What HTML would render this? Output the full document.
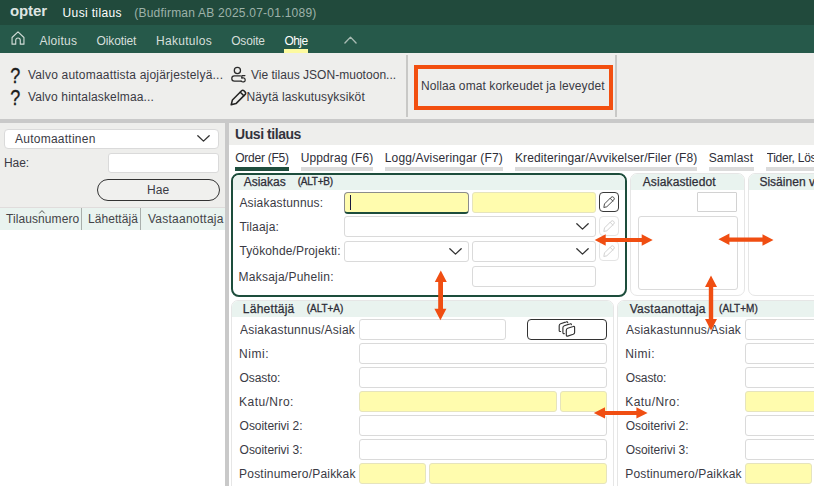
<!DOCTYPE html>
<html lang="fi">
<head>
<meta charset="utf-8">
<title>Uusi tilaus</title>
<style>
*{box-sizing:border-box;margin:0;padding:0}
html,body{width:814px;height:486px;overflow:hidden;background:#fff}
body{position:relative;font-family:"Liberation Sans",sans-serif;font-size:12px;color:#3a3a44}
.a{position:absolute}
.t{position:absolute;white-space:pre;line-height:1}
.m{-webkit-text-stroke:.25px currentColor}
.k{transform:scaleY(1.02);transform-origin:0 8px;-webkit-text-stroke:.3px currentColor}
.in{position:absolute;height:21px;background:#fff;border:1px solid #dadada;border-radius:3px}
.y{background:#fffcae;border-color:#e6e4bd}
.box{position:absolute;background:#fff;border:1px solid #e6e6e6;border-radius:7px;overflow:hidden}
.box .hd{position:absolute;left:0;right:0;top:0;height:16px;background:#e9f3ef}
.ul{position:absolute;top:167px;height:4px;background:#dbdbdb}
.q{font-size:22.5px;color:#1c1c1c;transform:scaleX(.8);transform-origin:50% 50%;-webkit-text-stroke:.35px #1c1c1c}
svg{position:absolute;overflow:visible}
</style>
</head>
<body>
<!-- title + menu bars -->
<div class="a" style="left:0;top:0;width:814px;height:25px;background:#214a3c"></div>
<div class="a" style="left:0;top:25px;width:814px;height:28px;background:#26594a"></div>
<div class="a" style="left:284px;top:49px;width:24px;height:4px;background:#fdfaa0"></div>
<!-- home icon -->
<svg style="left:10.6px;top:31.3px" width="14" height="14" viewBox="0 0 16 16" fill="none" stroke="#d0dbd6" stroke-width="1.3" stroke-linejoin="round" stroke-linecap="round"><path d="M1.2 7.4 L8 1 L14.8 7.4 V15 H10.6 V10.6 a2.6 2.6 0 0 0 -5.2 0 V15 H1.2 Z"/></svg>
<!-- collapse chevron -->
<svg style="left:343.5px;top:36.3px" width="13" height="8.4" viewBox="0 0 14 9" fill="none" stroke="#a9bbb3" stroke-width="1.5" stroke-linecap="round" stroke-linejoin="round"><path d="M1 7.5 L7 1.2 L13 7.5"/></svg>

<!-- ribbon -->
<div class="a" style="left:0;top:53px;width:814px;height:66px;background:#eeeeec"></div>
<div class="a" style="left:0;top:119px;width:814px;height:4px;background:#c9c9c9"></div>
<div class="a" style="left:406px;top:55px;width:2px;height:62px;background:#c8c8c6"></div>
<div class="a" style="left:615px;top:55px;width:2px;height:62px;background:#c8c8c6"></div>
<div class="a" style="left:414px;top:65px;width:199px;height:45px;border:4px solid #f24f10"></div>
<!-- question marks -->
<div class="t q" style="left:9px;top:65px">?</div>
<div class="t q" style="left:9px;top:87px">?</div>
<!-- user icon -->
<svg style="left:231px;top:67px" width="15" height="16" viewBox="0 0 15 16" fill="none" stroke="#2a2a2a" stroke-width="1.25" stroke-linecap="round" stroke-linejoin="round"><circle cx="6.4" cy="3.5" r="3.1"/><path d="M9.4 8.9 H3.4 a2.6 2.6 0 0 0 0 5.2 H10.2"/><path d="M13.9 8.6 H10.9 L10.7 11.1 c1.5 -0.8 3.5 -0.1 3.5 1.8 c0 2.1 -2.5 2.7 -4.1 1.2"/></svg>
<!-- pencil icon -->
<svg style="left:230px;top:88.5px" width="17" height="17" viewBox="0 0 17 17" fill="none" stroke="#222" stroke-width="1.5" stroke-linejoin="round" stroke-linecap="round"><path d="M1.2 15.8 L2.4 11 L11.6 1.8 a1.6 1.6 0 0 1 2.3 0 L15.2 3.1 a1.6 1.6 0 0 1 0 2.3 L6 14.6 Z"/><path d="M10.3 3.2 L13.8 6.7"/></svg>

<!-- left panel -->
<div class="a" style="left:0;top:123px;width:225px;height:363px;background:#fff"></div>
<div class="a" style="left:0;top:123px;width:225px;height:85px;background:#eeeeec"></div>
<div class="a" style="left:225px;top:123px;width:4px;height:363px;background:#c9c9c9"></div>
<div class="in" style="left:4px;top:129px;width:215px;height:20px;border-radius:4px"></div>
<svg style="left:197px;top:135px" width="13" height="7" viewBox="0 0 13 7" fill="none" stroke="#333" stroke-width="1.3" stroke-linecap="round" stroke-linejoin="round"><path d="M0.8 0.7 L6.5 6.1 L12.2 0.7"/></svg>
<div class="in" style="left:108px;top:153px;width:111px;height:20px"></div>
<div class="a" style="left:97px;top:179px;width:122.5px;height:22px;border:1px solid #333;border-radius:11px;background:#f0f0ee"></div>
<div class="a" style="left:0;top:207px;width:225px;height:1px;background:#e0dcdc"></div>
<div class="a" style="left:0;top:208px;width:225px;height:22px;background:#e9f3ef"></div>
<div class="a" style="left:81px;top:208px;width:1px;height:22px;background:#a9afac"></div>
<div class="a" style="left:140px;top:208px;width:1px;height:22px;background:#a9afac"></div>
<svg style="left:39px;top:210px" width="6" height="4" viewBox="0 0 6 4" fill="none" stroke="#444" stroke-width="0.9"><path d="M0.3 3.4 L3 0.6 L5.7 3.4"/></svg>

<!-- right panel -->
<div class="a" style="left:229px;top:123px;width:585px;height:22px;background:#eeeeec"></div>
<!-- tab underlines -->
<div class="ul" style="left:235px;width:54px;background:#1f4d3d"></div>
<div class="ul" style="left:301px;width:72px"></div>
<div class="ul" style="left:385px;width:118px"></div>
<div class="ul" style="left:515px;width:182px"></div>
<div class="ul" style="left:709px;width:45px"></div>
<div class="ul" style="left:766px;width:48px"></div>

<!-- Asiakas box -->
<div class="box" style="left:231px;top:173px;width:396px;height:124px;border:2px solid #1d4d3c;border-radius:8px"><div class="hd" style="height:15px"></div></div>
<div class="in y" style="left:344px;top:192px;width:125px;height:22px;border-color:#8c8c8c;border-bottom:2px solid #1d4d3c;border-radius:4px"></div>
<div class="a" style="left:350px;top:195px;width:1px;height:15px;background:#1a1a40"></div>
<div class="in y" style="left:472px;top:192px;width:124px"></div>
<div class="in" style="left:344px;top:216px;width:252px"></div>
<div class="in" style="left:344px;top:241px;width:125px"></div>
<div class="in" style="left:472px;top:241px;width:124px"></div>
<div class="in" style="left:472px;top:266px;width:124px"></div>
<svg style="left:576px;top:223px" width="13" height="7" viewBox="0 0 13 7" fill="none" stroke="#333" stroke-width="1.3" stroke-linecap="round" stroke-linejoin="round"><path d="M0.8 0.7 L6.5 6.1 L12.2 0.7"/></svg>
<svg style="left:449px;top:248px" width="13" height="7" viewBox="0 0 13 7" fill="none" stroke="#333" stroke-width="1.3" stroke-linecap="round" stroke-linejoin="round"><path d="M0.8 0.7 L6.5 6.1 L12.2 0.7"/></svg>
<svg style="left:576px;top:248px" width="13" height="7" viewBox="0 0 13 7" fill="none" stroke="#333" stroke-width="1.3" stroke-linecap="round" stroke-linejoin="round"><path d="M0.8 0.7 L6.5 6.1 L12.2 0.7"/></svg>
<!-- edit buttons -->
<div class="a" style="left:599px;top:192px;width:20px;height:20px;border:1px solid #3a3a3a;border-radius:4px;background:#fff"></div>
<div class="a" style="left:599px;top:216px;width:20px;height:20px;border:1px solid #e4e4e4;border-radius:4px;background:#fff"></div>
<div class="a" style="left:599px;top:241px;width:20px;height:20px;border:1px solid #e4e4e4;border-radius:4px;background:#fff"></div>
<svg style="left:603px;top:196px" width="12" height="12" viewBox="0 0 12 12" fill="none" stroke="#444" stroke-width="0.95" stroke-linejoin="round" stroke-linecap="round"><path d="M0.9 11.1 L1.5 7.9 L8 1.4 a1.9 1.9 0 0 1 2.7 2.7 L4.1 10.5 Z"/><path d="M7.1 2.3 L9.8 5"/></svg>
<svg style="left:603px;top:220px" width="12" height="12" viewBox="0 0 12 12" fill="none" stroke="#cfcfcf" stroke-width="0.95" stroke-linejoin="round" stroke-linecap="round"><path d="M0.9 11.1 L1.5 7.9 L8 1.4 a1.9 1.9 0 0 1 2.7 2.7 L4.1 10.5 Z"/><path d="M7.1 2.3 L9.8 5"/></svg>
<svg style="left:603px;top:245px" width="12" height="12" viewBox="0 0 12 12" fill="none" stroke="#cfcfcf" stroke-width="0.95" stroke-linejoin="round" stroke-linecap="round"><path d="M0.9 11.1 L1.5 7.9 L8 1.4 a1.9 1.9 0 0 1 2.7 2.7 L4.1 10.5 Z"/><path d="M7.1 2.3 L9.8 5"/></svg>

<!-- Asiakastiedot -->
<div class="box" style="left:630px;top:173px;width:115px;height:123px"><div class="hd"></div></div>
<div class="in" style="left:697px;top:192px;width:40px;height:20px;border-radius:1px;border-color:#d2d2d2"></div>
<div class="in" style="left:638px;top:216px;width:100px;height:74px"></div>
<!-- Sisäinen viesti -->
<div class="box" style="left:748px;top:173px;width:80px;height:123px"><div class="hd"></div></div>

<!-- Lähettäjä / Vastaanottaja -->
<div class="box" style="left:231px;top:300px;width:383px;height:200px"><div class="hd"></div></div>
<div class="box" style="left:617px;top:300px;width:383px;height:200px"><div class="hd"></div></div>
<div class="in" style="left:359px;top:319px;width:147px"></div>
<div class="in" style="left:359px;top:343px;width:248px"></div>
<div class="in" style="left:359px;top:367px;width:248px"></div>
<div class="in y" style="left:359px;top:391px;width:198px"></div>
<div class="in y" style="left:560px;top:391px;width:47px"></div>
<div class="in" style="left:359px;top:415px;width:248px"></div>
<div class="in" style="left:359px;top:439px;width:248px"></div>
<div class="in y" style="left:359px;top:463px;width:67px"></div>
<div class="in y" style="left:429px;top:463px;width:178px"></div>
<div class="in" style="left:745px;top:319px;width:147px"></div>
<div class="in" style="left:745px;top:343px;width:248px"></div>
<div class="in" style="left:745px;top:367px;width:248px"></div>
<div class="in y" style="left:745px;top:391px;width:198px"></div>
<div class="in y" style="left:946px;top:391px;width:47px"></div>
<div class="in" style="left:745px;top:415px;width:248px"></div>
<div class="in" style="left:745px;top:439px;width:248px"></div>
<div class="in y" style="left:745px;top:463px;width:67px"></div>
<div class="in y" style="left:815px;top:463px;width:178px"></div>
<!-- copy button -->
<div class="a" style="left:527px;top:319px;width:80px;height:21px;border:1px solid #333;border-radius:4px;background:#fff"></div>
<svg style="left:557px;top:320px" width="20" height="18" viewBox="0 0 20 18" fill="none" stroke="#333" stroke-width="1.15" stroke-linejoin="round" stroke-linecap="round"><path d="M9.3 10.3 Q9.3 8.8 10.7 8.3 L16.2 6.5 Q17.6 6 17.6 7.5 L17.6 12.4 Q17.6 13.8 16.2 14.3 L10.7 16.1 Q9.3 16.5 9.3 15.1 Z"/><path d="M14.4 4.7 Q14.2 3.4 12.9 3.9 L7.3 5.8 Q5.9 6.3 5.9 7.7 L5.9 12.6 Q5.9 13.8 7.3 13.6"/><path d="M10.7 2.6 Q10.5 1.4 9.2 1.9 L3.6 3.8 Q2.2 4.3 2.2 5.7 L2.2 10.5 Q2.2 11.7 3.6 11.5"/></svg>

<div class="t" style="left:9.9px;top:3px;letter-spacing:-0.06px;color:#dfe6e2;font-size:15px;font-weight:700;">opter</div>
<div class="t" style="left:62.6px;top:7px;letter-spacing:0.35px;color:#ffffff;">Uusi tilaus</div>
<div class="t" style="left:134.2px;top:7px;letter-spacing:0.23px;color:#9db2a9;">(Budfirman AB 2025.07-01.1089)</div>
<div class="t" style="left:39.4px;top:35px;letter-spacing:0.26px;color:#d6dfdb;">Aloitus</div>
<div class="t" style="left:96.5px;top:35px;letter-spacing:-0.12px;color:#d6dfdb;">Oikotiet</div>
<div class="t" style="left:156.0px;top:35px;letter-spacing:0.30px;color:#d6dfdb;">Hakutulos</div>
<div class="t" style="left:231.2px;top:35px;letter-spacing:-0.17px;color:#d6dfdb;">Osoite</div>
<div class="t" style="left:284.4px;top:35px;letter-spacing:-0.53px;color:#ffffff;">Ohje</div>
<div class="t" style="left:27.9px;top:69px;letter-spacing:0.20px;color:#3a3a44;">Valvo automaattista ajojärjestelyä...</div>
<div class="t" style="left:27.9px;top:91px;letter-spacing:0.16px;color:#3a3a44;">Valvo hintalaskelmaa...</div>
<div class="t" style="left:250.9px;top:69px;letter-spacing:0.03px;color:#3a3a44;">Vie tilaus JSON-muotoon...</div>
<div class="t" style="left:246.4px;top:91px;letter-spacing:0.15px;color:#3a3a44;">Näytä laskutusyksiköt</div>
<div class="t" style="left:420.9px;top:80px;letter-spacing:0.09px;color:#3a3a44;">Nollaa omat korkeudet ja leveydet</div>
<div class="t" style="left:15.0px;top:133px;letter-spacing:0.25px;color:#3a3a44;">Automaattinen</div>
<div class="t" style="left:3.9px;top:157px;letter-spacing:-0.03px;color:#3a3a44;">Hae:</div>
<div class="t" style="left:147.1px;top:184px;letter-spacing:0.07px;color:#3a3a44;">Hae</div>
<div class="t" style="left:6.1px;top:213px;letter-spacing:0.07px;color:#444448;">Tilausnumero</div>
<div class="t" style="left:88.0px;top:213px;letter-spacing:0.06px;color:#444448;">Lähettäjä</div>
<div class="t" style="left:148.0px;top:213px;letter-spacing:0.24px;color:#444448;">Vastaanottaja</div>
<div class="t" style="left:235.0px;top:127px;letter-spacing:-0.44px;color:#33333d;font-size:14px;font-weight:700;">Uusi tilaus</div>
<div class="t" style="left:235.2px;top:152px;letter-spacing:-0.24px;color:#2e2e38;">Order (F5)</div>
<div class="t" style="left:300.8px;top:152px;letter-spacing:0.09px;color:#2e2e38;">Uppdrag (F6)</div>
<div class="t" style="left:384.8px;top:152px;letter-spacing:0.14px;color:#2e2e38;">Logg/Aviseringar (F7)</div>
<div class="t" style="left:515.0px;top:152px;letter-spacing:0.11px;color:#2e2e38;">Krediteringar/Avvikelser/Filer (F8)</div>
<div class="t" style="left:708.7px;top:152px;letter-spacing:0.17px;color:#2e2e38;">Samlast</div>
<div class="t" style="left:766.5px;top:152px;letter-spacing:-0.24px;color:#2e2e38;width:47.5px;overflow:hidden;">Tider, Lös</div>
<div class="t m" style="left:243.7px;top:176px;letter-spacing:-0.01px;color:#2e2e38;">Asiakas</div>
<div class="t m k" style="left:297.7px;top:177px;letter-spacing:-0.23px;color:#2e2e38;font-size:10px;">(ALT+B)</div>
<div class="t" style="left:239.4px;top:197px;letter-spacing:0.18px;color:#3a3a44;">Asiakastunnus:</div>
<div class="t" style="left:239.4px;top:221px;letter-spacing:0.17px;color:#3a3a44;">Tilaaja:</div>
<div class="t" style="left:239.4px;top:245px;letter-spacing:0.14px;color:#3a3a44;">Työkohde/Projekti:</div>
<div class="t" style="left:238.5px;top:271px;letter-spacing:0.24px;color:#3a3a44;">Maksaja/Puhelin:</div>
<div class="t m" style="left:642.7px;top:176px;letter-spacing:0.13px;color:#2e2e38;">Asiakastiedot</div>
<div class="t m" style="left:759.4px;top:176px;letter-spacing:0.02px;color:#2e2e38;width:54.6px;overflow:hidden;">Sisäinen v</div>
<div class="t m" style="left:242.8px;top:303px;letter-spacing:0.26px;color:#2e2e38;">Lähettäjä</div>
<div class="t m k" style="left:306.7px;top:304px;letter-spacing:-0.03px;color:#2e2e38;font-size:10px;">(ALT+A)</div>
<div class="t m" style="left:629.7px;top:303px;letter-spacing:0.28px;color:#2e2e38;">Vastaanottaja</div>
<div class="t m k" style="left:719.1px;top:304px;letter-spacing:0.05px;color:#2e2e38;font-size:10px;">(ALT+M)</div>
<div class="t" style="left:240.0px;top:324px;letter-spacing:0.23px;color:#3a3a44;width:115.6px;overflow:hidden;">Asiakastunnus/Asiak</div>
<div class="t" style="left:626.0px;top:324px;letter-spacing:0.23px;color:#3a3a44;width:115.6px;overflow:hidden;">Asiakastunnus/Asiak</div>
<div class="t" style="left:239.1px;top:348px;letter-spacing:0.52px;color:#3a3a44;">Nimi:</div>
<div class="t" style="left:625.2px;top:348px;letter-spacing:0.52px;color:#3a3a44;">Nimi:</div>
<div class="t" style="left:239.6px;top:372px;letter-spacing:-0.10px;color:#3a3a44;">Osasto:</div>
<div class="t" style="left:625.7px;top:372px;letter-spacing:-0.10px;color:#3a3a44;">Osasto:</div>
<div class="t" style="left:239.1px;top:396px;letter-spacing:0.45px;color:#3a3a44;">Katu/Nro:</div>
<div class="t" style="left:625.2px;top:396px;letter-spacing:0.45px;color:#3a3a44;">Katu/Nro:</div>
<div class="t" style="left:239.6px;top:420px;letter-spacing:-0.04px;color:#3a3a44;">Osoiterivi 2:</div>
<div class="t" style="left:625.7px;top:420px;letter-spacing:-0.04px;color:#3a3a44;">Osoiterivi 2:</div>
<div class="t" style="left:239.6px;top:444px;letter-spacing:-0.04px;color:#3a3a44;">Osoiterivi 3:</div>
<div class="t" style="left:625.7px;top:444px;letter-spacing:-0.04px;color:#3a3a44;">Osoiterivi 3:</div>
<div class="t" style="left:239.1px;top:468px;letter-spacing:0.20px;color:#3a3a44;width:117.9px;overflow:hidden;">Postinumero/Paikkak</div>
<div class="t" style="left:625.2px;top:468px;letter-spacing:0.20px;color:#3a3a44;width:117.8px;overflow:hidden;">Postinumero/Paikkak</div>

<!-- arrows -->
<svg style="left:0;top:0" width="814" height="486" viewBox="0 0 814 486" fill="#f04e12" stroke="none">
<path d="M594.7 240 L605.7 234.2 V238 H641.7 V234.2 L652.7 240 L641.7 245.8 V242 H605.7 V245.8 Z"/>
<path d="M718.4 239.3 L729.4 233.5 V237.4 H762.5 V234.2 L773.5 240 L762.5 245.8 V241.8 H729.4 V245.1 Z"/>
<path d="M440.8 270.4 L446.8 281.9 H443 V308.7 H446.4 L440.4 320.2 L434.4 308.7 H438.2 V281.9 H434.8 Z"/>
<path d="M711 275.4 L717 286.9 H713.2 V319.1 H717 L711 330.6 L705 319.1 H708.8 V286.9 H705 Z"/>
<path d="M593.8 412.9 L605 407.2 V410.9 H636.4 V407.2 L647.6 412.9 L636.4 418.6 V414.9 H605 V418.6 Z"/>
</svg>
</body>
</html>
